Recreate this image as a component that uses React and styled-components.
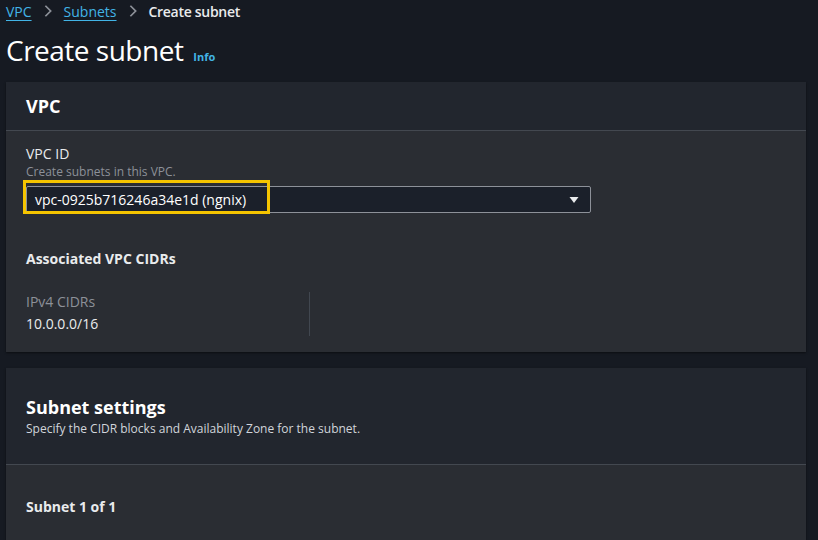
import React from 'react'
import styled, { createGlobalStyle } from 'styled-components'

const GlobalStyle = createGlobalStyle`
  html, body {
    margin: 0;
    padding: 0;
    background: #161a22;
  }
  body {
    font-family: "Open Sans", "Noto Sans", Arial, sans-serif;
    color: #e9ebed;
    -webkit-font-smoothing: antialiased;
  }
`

const Page = styled.div`
  padding: 0 12px 0 6px;
  height: 540px;
  overflow: hidden;
`

const Breadcrumbs = styled.nav`
  display: flex;
  align-items: center;
  height: 22px;
  font-size: 14px;
  gap: 9px;
`

const Crumb = styled.a`
  color: #42b4e6;
  text-decoration: underline;
  text-underline-offset: 3px;
  text-decoration-thickness: 1px;
`

const CurrentCrumb = styled.span`
  font-weight: 600;
  color: #e9ebed;
  letter-spacing: -0.3px;
`

const Chevron = styled.svg`
  width: 14px;
  height: 14px;
  color: #8d9199;
`

const TitleRow = styled.div`
  display: flex;
  align-items: baseline;
  gap: 10px;
  margin-top: 10px;
  margin-bottom: 14px;
  height: 36px;
`

const Title = styled.h1`
  margin: 0;
  font-size: 28px;
  font-weight: 400;
  line-height: 36px;
  color: #fff;
  letter-spacing: -0.5px;
`

const Info = styled.a`
  font-size: 11px;
  font-weight: 700;
  color: #42b4e6;
`

const Panel = styled.section`
  background: #2a2d33;
  box-shadow: 0 1px 2px rgba(0, 0, 0, 0.5);
  margin-bottom: ${p => p.$gap || 0}px;
`

const PanelHeader = styled.header`
  background: #22262e;
  border-bottom: 1px solid #434850;
  padding: ${p => p.$pad || '0 20px'};
  height: ${p => p.$height}px;
  display: flex;
  flex-direction: column;
  justify-content: ${p => (p.$top ? 'flex-start' : 'center')};
  box-sizing: border-box;
`

const PanelTitle = styled.h2`
  margin: 0;
  font-size: 18px;
  font-weight: 700;
  line-height: 24px;
  color: #fff;
`

const PanelDesc = styled.p`
  margin: 2px 0 0;
  font-size: 12px;
  line-height: 16px;
  color: #d1d5db;
`

const PanelBody = styled.div`
  padding: ${p => p.$pad};
  height: ${p => p.$height}px;
  box-sizing: border-box;
`

const FieldLabel = styled.label`
  display: block;
  font-size: 14px;
  line-height: 20px;
  color: #e9ebed;
`

const FieldHint = styled.div`
  font-size: 12px;
  line-height: 16px;
  color: #8d9199;
`

const SelectWrap = styled.div`
  position: relative;
  width: 565px;
  margin-top: 6px;
`

const Select = styled.div`
  display: flex;
  align-items: center;
  justify-content: space-between;
  height: 27px;
  box-sizing: border-box;
  border: 1px solid #8d9199;
  border-radius: 2px;
  background: #1b202a;
  padding: 0 10px 0 8px;
  font-size: 14px;
  color: #fff;
`

const Caret = styled.svg`
  width: 12px;
  height: 12px;
  color: #e9ebed;
`

const Highlight = styled.div`
  position: absolute;
  left: -3px;
  top: -6px;
  width: 247px;
  height: 34px;
  box-sizing: border-box;
  border: 3px solid #f5c400;
  pointer-events: none;
`

const SubHeading = styled.h3`
  margin: ${p => p.$mt || 0}px 0 0;
  font-size: 14px;
  font-weight: 700;
  line-height: 20px;
  color: #e9ebed;
`

const KVGrid = styled.div`
  display: grid;
  grid-template-columns: 284px 1fr;
  margin-top: 23px;
`

const KVCol = styled.div`
  border-right: ${p => (p.$divider ? '1px solid #414750' : 'none')};
  height: 44px;
`

const KVKey = styled.div`
  font-size: 14px;
  line-height: 20px;
  color: #8d9199;
`

const KVValue = styled.div`
  font-size: 14px;
  line-height: 20px;
  color: #e9ebed;
  margin-top: 2px;
`

export default function App() {
  return (
    <>
      <GlobalStyle />
      <Page>
        <Breadcrumbs>
          <Crumb>VPC</Crumb>
          <Chevron viewBox="0 0 16 16" fill="none">
            <path d="M5 2l6 6-6 6" stroke="currentColor" strokeWidth="2" />
          </Chevron>
          <Crumb>Subnets</Crumb>
          <Chevron viewBox="0 0 16 16" fill="none">
            <path d="M5 2l6 6-6 6" stroke="currentColor" strokeWidth="2" />
          </Chevron>
          <CurrentCrumb>Create subnet</CurrentCrumb>
        </Breadcrumbs>

        <TitleRow>
          <Title>Create subnet</Title>
          <Info>Info</Info>
        </TitleRow>

        <Panel $gap={16}>
          <PanelHeader $height={49}>
            <PanelTitle>VPC</PanelTitle>
          </PanelHeader>
          <PanelBody $pad="13px 20px 0" $height={221}>
            <FieldLabel>VPC ID</FieldLabel>
            <FieldHint>Create subnets in this VPC.</FieldHint>
            <SelectWrap>
              <Select>
                <span>vpc-0925b716246a34e1d (ngnix)</span>
                <Caret viewBox="0 0 16 16">
                  <path d="M2 4h12l-6 8z" fill="currentColor" />
                </Caret>
              </Select>
              <Highlight />
            </SelectWrap>

            <SubHeading $mt={36}>Associated VPC CIDRs</SubHeading>
            <KVGrid>
              <KVCol $divider>
                <KVKey>IPv4 CIDRs</KVKey>
                <KVValue>10.0.0.0/16</KVValue>
              </KVCol>
              <KVCol />
            </KVGrid>
          </PanelBody>
        </Panel>

        <Panel>
          <PanelHeader $height={97} $pad="27px 20px 0" $top>
            <PanelTitle>Subnet settings</PanelTitle>
            <PanelDesc>Specify the CIDR blocks and Availability Zone for the subnet.</PanelDesc>
          </PanelHeader>
          <PanelBody $pad="32px 20px 0" $height={120}>
            <SubHeading>Subnet 1 of 1</SubHeading>
          </PanelBody>
        </Panel>
      </Page>
    </>
  )
}
